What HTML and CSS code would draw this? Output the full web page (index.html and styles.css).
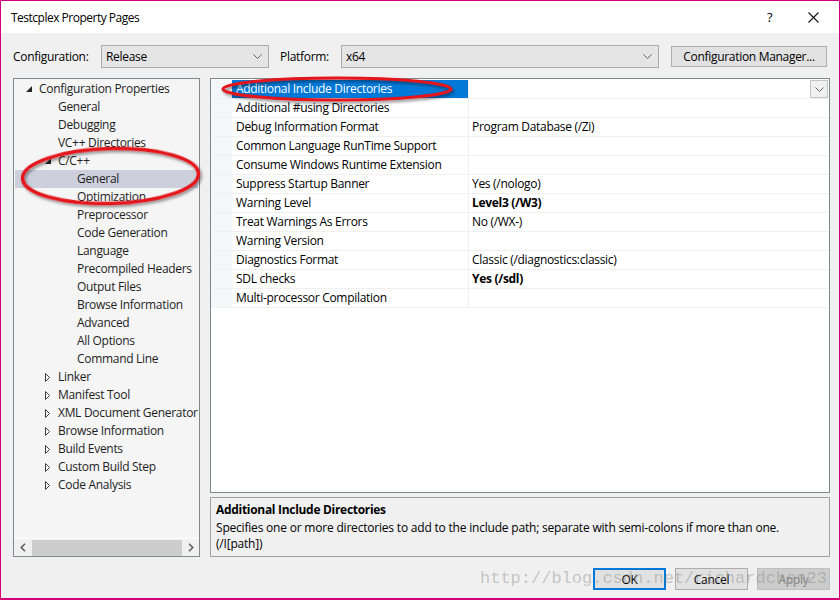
FILE: index.html
```html
<!DOCTYPE html>
<html lang="en">
<head>
  <meta charset="UTF-8">
  <title>Testcplex Property Pages</title>
  <link rel="stylesheet" href="styles.css">
</head>
<body>
  <div class="window">
    <!-- Title bar -->
    <div class="titlebar">
      <span class="title">Testcplex Property Pages</span>
      <span class="help">?</span>
      <span class="close">
        <svg width="11" height="11" viewBox="0 0 11 11"><path d="M0.5 0.5 L10.5 10.5 M10.5 0.5 L0.5 10.5" stroke="#111" stroke-width="1.1" fill="none"/></svg>
      </span>
    </div>

    <div class="content">
      <!-- Configuration row -->
      <div class="config-row">
        <span class="label-conf">Configuration:</span>
        <div class="select select-conf">
          <span class="select-text">Release</span>
          <svg class="chev" width="9" height="5" viewBox="0 0 9 5"><polyline points="0.5,0.5 4.5,4.5 8.5,0.5" stroke="#606060" fill="none"/></svg>
        </div>
        <span class="label-plat">Platform:</span>
        <div class="select select-plat">
          <span class="select-text">x64</span>
          <svg class="chev" width="9" height="5" viewBox="0 0 9 5"><polyline points="0.5,0.5 4.5,4.5 8.5,0.5" stroke="#606060" fill="none"/></svg>
        </div>
        <button class="config-btn">Configuration Manager...</button>
      </div>

      <div class="main">
        <!-- Tree -->
        <div class="tree">
          <div class="tree-list">
            <div class="node lvl0"><span class="arrow"><svg width="6" height="6" viewBox="0 0 6 6"><polygon points="6,0 6,6 0,6" fill="#262626"/></svg></span>Configuration Properties</div>
            <div class="node lvl1"><span class="arrow"></span>General</div>
            <div class="node lvl1"><span class="arrow"></span>Debugging</div>
            <div class="node lvl1"><span class="arrow"></span>VC++ Directories</div>
            <div class="node lvl1"><span class="arrow"><svg width="6" height="6" viewBox="0 0 6 6"><polygon points="6,0 6,6 0,6" fill="#262626"/></svg></span>C/C++</div>
            <div class="node lvl2 selected"><span class="arrow"></span>General</div>
            <div class="node lvl2"><span class="arrow"></span>Optimization</div>
            <div class="node lvl2"><span class="arrow"></span>Preprocessor</div>
            <div class="node lvl2"><span class="arrow"></span>Code Generation</div>
            <div class="node lvl2"><span class="arrow"></span>Language</div>
            <div class="node lvl2"><span class="arrow"></span>Precompiled Headers</div>
            <div class="node lvl2"><span class="arrow"></span>Output Files</div>
            <div class="node lvl2"><span class="arrow"></span>Browse Information</div>
            <div class="node lvl2"><span class="arrow"></span>Advanced</div>
            <div class="node lvl2"><span class="arrow"></span>All Options</div>
            <div class="node lvl2"><span class="arrow"></span>Command Line</div>
            <div class="node lvl1"><span class="arrow"><svg width="5" height="9" viewBox="0 0 5 9"><polygon points="0.5,0.5 4.5,4.5 0.5,8.5" fill="#fff" stroke="#404040"/></svg></span>Linker</div>
            <div class="node lvl1"><span class="arrow"><svg width="5" height="9" viewBox="0 0 5 9"><polygon points="0.5,0.5 4.5,4.5 0.5,8.5" fill="#fff" stroke="#404040"/></svg></span>Manifest Tool</div>
            <div class="node lvl1"><span class="arrow"><svg width="5" height="9" viewBox="0 0 5 9"><polygon points="0.5,0.5 4.5,4.5 0.5,8.5" fill="#fff" stroke="#404040"/></svg></span>XML Document Generator</div>
            <div class="node lvl1"><span class="arrow"><svg width="5" height="9" viewBox="0 0 5 9"><polygon points="0.5,0.5 4.5,4.5 0.5,8.5" fill="#fff" stroke="#404040"/></svg></span>Browse Information</div>
            <div class="node lvl1"><span class="arrow"><svg width="5" height="9" viewBox="0 0 5 9"><polygon points="0.5,0.5 4.5,4.5 0.5,8.5" fill="#fff" stroke="#404040"/></svg></span>Build Events</div>
            <div class="node lvl1"><span class="arrow"><svg width="5" height="9" viewBox="0 0 5 9"><polygon points="0.5,0.5 4.5,4.5 0.5,8.5" fill="#fff" stroke="#404040"/></svg></span>Custom Build Step</div>
            <div class="node lvl1"><span class="arrow"><svg width="5" height="9" viewBox="0 0 5 9"><polygon points="0.5,0.5 4.5,4.5 0.5,8.5" fill="#fff" stroke="#404040"/></svg></span>Code Analysis</div>
          </div>
          <div class="hscroll">
            <svg class="sb-arrow" width="6" height="9" viewBox="0 0 6 9"><polyline points="5,0.8 1.3,4.5 5,8.2" stroke="#606060" stroke-width="1.6" fill="none"/></svg>
            <div class="sb-thumb"></div>
            <svg class="sb-arrow" width="6" height="9" viewBox="0 0 6 9"><polyline points="1,0.8 4.7,4.5 1,8.2" stroke="#606060" stroke-width="1.6" fill="none"/></svg>
          </div>
        </div>

        <!-- Property grid + description -->
        <div class="right">
          <div class="props">
            <div class="row selected">
              <div class="strip"></div>
              <div class="name">Additional Include Directories</div>
              <div class="value">
                <span></span>
                <span class="drop"><svg width="9" height="5" viewBox="0 0 9 5"><polyline points="0.5,0.5 4.5,4.5 8.5,0.5" stroke="#606060" fill="none"/></svg></span>
              </div>
            </div>
            <div class="row"><div class="strip"></div><div class="name">Additional #using Directories</div><div class="value"></div></div>
            <div class="row"><div class="strip"></div><div class="name">Debug Information Format</div><div class="value">Program Database (/Zi)</div></div>
            <div class="row"><div class="strip"></div><div class="name">Common Language RunTime Support</div><div class="value"></div></div>
            <div class="row"><div class="strip"></div><div class="name">Consume Windows Runtime Extension</div><div class="value"></div></div>
            <div class="row"><div class="strip"></div><div class="name">Suppress Startup Banner</div><div class="value">Yes (/nologo)</div></div>
            <div class="row"><div class="strip"></div><div class="name">Warning Level</div><div class="value bold">Level3 (/W3)</div></div>
            <div class="row"><div class="strip"></div><div class="name">Treat Warnings As Errors</div><div class="value">No (/WX-)</div></div>
            <div class="row"><div class="strip"></div><div class="name">Warning Version</div><div class="value"></div></div>
            <div class="row"><div class="strip"></div><div class="name">Diagnostics Format</div><div class="value">Classic (/diagnostics:classic)</div></div>
            <div class="row"><div class="strip"></div><div class="name">SDL checks</div><div class="value bold">Yes (/sdl)</div></div>
            <div class="row"><div class="strip"></div><div class="name">Multi-processor Compilation</div><div class="value"></div></div>
          </div>
          <div class="desc">
            <div class="desc-title">Additional Include Directories</div>
            <div class="desc-text">Specifies one or more directories to add to the include path; separate with semi-colons if more than one.</div>
            <div class="desc-text">(/I[path])</div>
          </div>
        </div>
      </div>

      <!-- Dialog buttons -->
      <div class="footer">
        <button class="dlg-btn default">OK</button>
        <button class="dlg-btn">Cancel</button>
        <button class="dlg-btn disabled">Apply</button>
      </div>
    </div>

    <div class="watermark">http://blog.csdn.net/richardchen23</div>

    <!-- red annotation circles -->
    <svg class="marks" width="840" height="600" viewBox="0 0 840 600">
      <defs>
        <filter id="shade" x="-10%" y="-30%" width="120%" height="160%">
          <feDropShadow dx="1.5" dy="2" stdDeviation="1.5" flood-color="#000" flood-opacity="0.45"/>
        </filter>
      </defs>
      <ellipse cx="337" cy="89" rx="114" ry="11" fill="none" stroke="#e4141b" stroke-width="3.2" filter="url(#shade)"/>
      <ellipse cx="110.5" cy="176" rx="88" ry="27.5" fill="none" stroke="#e4141b" stroke-width="3.5" filter="url(#shade)" transform="rotate(-1.5 110.5 176)"/>
    </svg>
  </div>
</body>
</html>
```

FILE: styles.css
```css
body { margin: 0; font-family: "Open Sans", "Noto Sans", sans-serif; font-size: 12px; letter-spacing: -0.3px; color: #000; }
.window { width: 840px; height: 600px; box-sizing: border-box; border: 1px solid #d4007a; border-bottom-width: 2px; background: #f0f0f0; position: relative; overflow: hidden; }

.titlebar { height: 32px; background: #fff; display: flex; align-items: center; padding: 0 20px 0 10px; }
.title { flex: 1; letter-spacing: -0.5px; }
.help { width: 41px; font-size: 13px; }
.close { display: flex; align-items: center; }

.content { padding: 12px 9px 0 12px; }

.config-row { display: flex; align-items: center; height: 23px; }
.label-conf { width: 88px; }
.label-plat { width: 61px; margin-left: 11px; }
.select { height: 23px; box-sizing: border-box; border: 1px solid #acacac; background: #e5e5e5; display: flex; align-items: center; padding: 0 6px 0 4px; }
.select-text { flex: 1; }
.select-conf { width: 168px; }
.select-plat { width: 318px; }
.config-btn { margin-left: 12px; width: 156px; height: 21px; box-sizing: border-box; border: 1px solid #adadad; background: #e1e1e1; font-family: inherit; font-size: 12px; letter-spacing: inherit; padding: 0; color: #000; }

.main { display: grid; grid-template-columns: 187px 620px; gap: 10px; margin-top: 10px; height: 479px; }

.tree { border: 1px solid #828790; background: #f5f5f5; display: flex; flex-direction: column; overflow: hidden; }
.tree-list { flex: 1; padding-top: 1px; overflow: hidden; }
.node { height: 18px; line-height: 18px; display: flex; align-items: center; white-space: nowrap; color: #1e1e1e; }
.node.lvl0 { padding-left: 12px; }
.node.lvl1 { padding-left: 31px; }
.node.lvl2 { padding-left: 50px; }
.node.selected { background: #cdd0dc; margin: 0 1px; padding-left: 49px; }
.arrow { width: 13px; flex: none; display: flex; align-items: center; }

.hscroll { height: 17px; border-top: 1px solid #fff; background: #f0f0f0; display: flex; align-items: center; padding: 0 5px 0 6px; gap: 6px; }
.sb-thumb { flex: 1; height: 16px; background: #cdcdcd; }

.right { display: flex; flex-direction: column; gap: 4px; }
.props { flex: 1; border: 1px solid #828790; background: #fff; padding-top: 1px; }
.row { display: grid; grid-template-columns: 21px 237px 1fr; height: 19px; box-sizing: border-box; border-bottom: 1px solid #f0f0f0; }
.strip { background: #f4f6fa; }
.name { padding-left: 4px; line-height: 18px; white-space: nowrap; border-right: 1px solid #f0f0f0; }
.value { padding-left: 3px; line-height: 18px; white-space: nowrap; display: flex; }
.value.bold { font-weight: bold; }
.row.selected .name { background: #0078d7; color: #fff; }
.value span:first-child { flex: 1; }
.drop { width: 18px; height: 18px; box-sizing: border-box; border: 1px solid #c4c4c4; background: #f0f0f0; display: flex; align-items: center; justify-content: center; margin-right: 1px; }

.desc { height: 60px; box-sizing: border-box; border: 1px solid #a0a0a0; padding: 4px 5px 0; line-height: 16px; }
.desc-title { font-weight: bold; margin-bottom: 2px; }
.desc-text { white-space: nowrap; letter-spacing: -0.2px; }

.footer { display: flex; justify-content: flex-end; gap: 9px; margin-top: 11px; }
.dlg-btn { width: 73px; height: 22px; box-sizing: border-box; border: 1px solid #adadad; background: #e1e1e1; font-family: inherit; font-size: 12px; letter-spacing: inherit; padding: 0; color: #000; }
.dlg-btn.default { border: 2px solid #0078d7; }
.dlg-btn.disabled { background: #cccccc; border-color: #bfbfbf; color: #838383; }

.watermark { position: absolute; left: 479px; top: 568px; font-family: "Liberation Mono", monospace; font-size: 17px; letter-spacing: 0; color: rgba(140, 140, 140, 0.45); white-space: nowrap; pointer-events: none; }
.marks { position: absolute; left: -1px; top: -1px; pointer-events: none; }
```
